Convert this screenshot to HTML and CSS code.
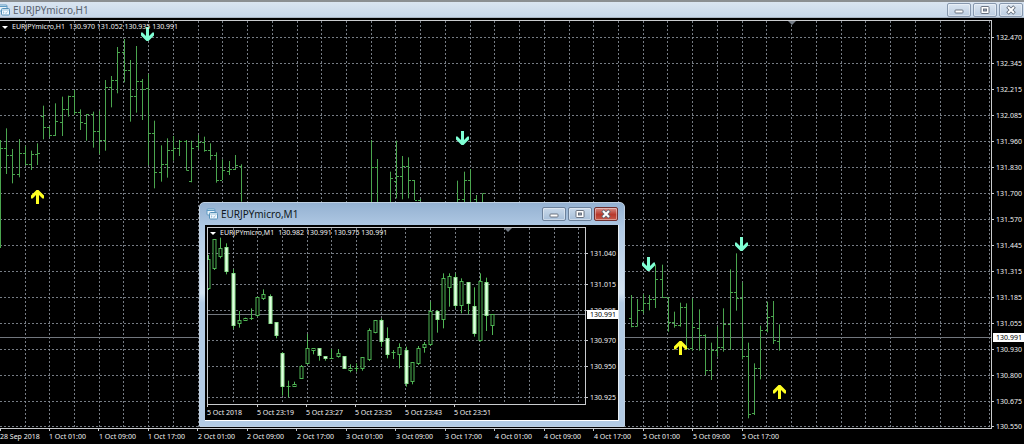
FILE: index.html
```html
<!DOCTYPE html>
<html lang="en">
<head>
<meta charset="utf-8">
<title>EURJPYmicro,H1</title>
<link rel="stylesheet" href="styles.css">
</head>
<body>
<svg class="defs" aria-hidden="true">
  <symbol id="chart-icon" viewBox="0 0 12 12">
    <rect x="1" y="1" width="8" height="6" rx="1" fill="#e9f4fb" stroke="#5f9bc4"/>
    <path d="M1 2.500h8" stroke="#5f9bc4"/>
    <rect x="3.500" y="4.500" width="8" height="6.500" rx="1" fill="#f4faff" stroke="#5590b8"/>
    <path d="M3.500 6h8M5.500 7.500v2M7 8.500l1 1 1.500-2" fill="none" stroke="#7fb0cd" stroke-width="0.8"/>
  </symbol>
  <symbol id="min-icon" viewBox="0 0 12 10">
    <rect x="2" y="5" width="8" height="3" rx="0.800" fill="#fff" stroke="#5d6775" stroke-width="0.9"/>
  </symbol>
  <symbol id="max-icon" viewBox="0 0 12 10">
    <rect x="2" y="1.500" width="8" height="7" rx="0.800" fill="#fff" stroke="#5d6775" stroke-width="0.9"/>
    <rect x="4.500" y="4" width="3" height="2" fill="#9aa7b8" stroke="#5d6775" stroke-width="0.9"/>
  </symbol>
  <symbol id="close-icon" viewBox="0 0 12 10">
    <path d="M2.500 1.500l7 7M9.500 1.500l-7 7" stroke="#5d6775" stroke-width="3.600"/>
    <path d="M3 2l6 6M9 2l-6 6" stroke="#fff" stroke-width="2"/>
  </symbol>
</svg>

<main class="window window-main">
  <header class="titlebar">
    <svg class="app-icon" aria-hidden="true"><use href="#chart-icon"/></svg>
    <h1 class="title">EURJPYmicro,H1</h1>
    <button class="control" aria-label="Minimize"><svg><use href="#min-icon"/></svg></button>
    <button class="control" aria-label="Maximize"><svg><use href="#max-icon"/></svg></button>
    <button class="control" aria-label="Close"><svg><use href="#close-icon"/></svg></button>
  </header>
  <section class="chart" id="h1">
    <svg class="plot"></svg>
    <svg class="prices"></svg>
    <svg class="times"></svg>
    <p class="quote"><span class="arrow"></span><span>EURJPYmicro,H1</span><span>130.970 131.052 130.935 130.991</span></p>
  </section>
</main>

<aside class="window window-child">
  <header class="titlebar">
    <svg class="app-icon" aria-hidden="true"><use href="#chart-icon"/></svg>
    <h2 class="title">EURJPYmicro,M1</h2>
    <button class="control" aria-label="Minimize"><svg><use href="#min-icon"/></svg></button>
    <button class="control" aria-label="Maximize"><svg><use href="#max-icon"/></svg></button>
    <button class="control control-close" aria-label="Close"><svg><use href="#close-icon"/></svg></button>
  </header>
  <section class="chart" id="m1">
    <svg class="plot"></svg>
    <svg class="prices"></svg>
    <svg class="times"></svg>
    <p class="quote"><span class="arrow"></span><span>EURJPYmicro,M1</span><span>130.982 130.991 130.975 130.991</span></p>
  </section>
</aside>
<script src="charts.js"></script>
</body>
</html>
```
FILE: styles.css
```css
* { box-sizing: border-box; }

body {
  margin: 0;
  min-height: 100vh;
  background: #000;
  color: #f0f0f0;
  font-family: "Noto Sans", "DejaVu Sans Condensed", sans-serif;
  overflow: hidden;
}

.defs { position: absolute; width: 0; height: 0; }

.titlebar { display: flex; align-items: center; }

.app-icon { width: 12px; height: 12px; flex: none; }

.title {
  flex: 1;
  margin: 0;
  font-size: 10px;
  font-weight: 400;
  line-height: 14px;
}

.control {
  display: flex;
  align-items: center;
  justify-content: center;
  flex: none;
  width: 24px;
  height: 14px;
  padding: 0;
  border: 1px solid #8798ae;
  border-radius: 2px;
  background: linear-gradient(#dbe6f2, #bccde1);
  box-shadow: inset 0 0 0 1px rgba(255, 255, 255, 0.4);
}

.control svg { width: 12px; height: 10px; }

.window-main .titlebar {
  height: 18px;
  gap: 2px;
  padding-right: 1px;
  border-top: 2px solid #8b8f92;
  border-bottom: 1px solid #a9b5c3;
  background: linear-gradient(#dae5f1, #c6d7e9);
}

.window-main .app-icon { margin-left: -2px; }
.window-main .title { padding-left: 1px; color: #58616d; }

.chart {
  position: relative;
  display: grid;
  grid-template-columns: 1fr 32px;
  padding-top: 2px;
  background: #000;
}

.plot, .prices, .times { display: block; width: 100%; }
.prices { overflow: visible; }

.plot {
  border: 1px solid #c9cbce;
  border-left: 0;
}

.window-main .plot, .window-main .prices { height: 409px; }
.times { grid-column: 1 / -1; height: 15px; }

.quote {
  position: absolute;
  top: 4px;
  left: 2px;
  display: flex;
  align-items: center;
  gap: 4px;
  margin: 0;
  font-size: 7px;
  line-height: 10px;
  white-space: nowrap;
}

.arrow {
  border: 3px solid transparent;
  border-top-color: #fff;
  border-bottom: 0;
}

.window-child {
  position: absolute;
  left: 199px;
  top: 202px;
  width: 426px;
  padding: 0 5px 5px;
  border: 1px solid #bfd0e2;
  border-radius: 5px 5px 1px 1px;
  background: linear-gradient(#94b1d1, #b0c9e4 24px, #d4e3f1 90px, #b3cbe4 100px, #b3cbe4);
}

.window-child .titlebar { height: 22px; gap: 2px; padding-right: 1px; }
.window-child .title { padding-left: 1px; color: #101820; }
.window-child .app-icon { margin-left: 1px; }
.window-child .control { background: linear-gradient(#c9d9ea, #a7bfd9); border-color: #6c819b; }
.window-child .control-close { background: linear-gradient(#d78f88, #b8382b 55%, #c65a4b); border-color: #6e3030; }

.window-child .chart {
  padding: 2px 0 0 2px;
  border-right: 1px solid #e8edf2;
  border-bottom: 1px solid #fff;
}

.window-child .plot { border-left: 1px solid #c9cbce; }
.window-child .plot, .window-child .prices { height: 178px; }
.window-child .quote { top: 3px; left: 5px; }

.grid { stroke: #8b929c; stroke-width: 1; stroke-dasharray: 2 2; opacity: 0.85; }
.tick { stroke: #c9cbce; }
.price-line { stroke: #72777e; }
.bar { stroke: #4aa54e; fill: none; }
.candle { stroke: #4fb554; fill: #000; }
.candle-down { stroke: #8ee590; fill: #e2ffe2; }
.marker { fill: #737b85; }
.label { fill: #f0f0f0; font-size: 7px; }
.label-box { fill: #fff; }
.label-current { fill: #000; }
.sell { fill: #7fffd4; }
.buy { fill: #ffff22; }
```
FILE: charts.js
```js
const NS = "http://www.w3.org/2000/svg";

function add(parent, tag, attrs, text) {
  const node = document.createElementNS(NS, tag);
  for (const key in attrs) node.setAttribute(key, attrs[key]);
  if (text) node.textContent = text;
  parent.appendChild(node);
  return node;
}

// Snap a coordinate to the middle of a device pixel.
const snap = v => Math.floor(v) + 0.5;

// Series values are stored in thirds of a pixel from each series origin.
// OHLC rows: x, high, low, open, close.
const h1Series = [
  { x: 0, y: 0, bars: [
    [1,420,744,0,445],[20,385,522,445,466],[38,447,550,466,522],[57,417,532,522,459],
    [76,438,495,459,493],[95,452,510,493,463],[113,430,495,463,460],[131,317,418,348,381],
    [149,380,412,381,405],[167,310,408,406,364],[187,290,408,366,328],[206,287,350,328,289],
    [223,270,345,289,337],[242,328,390,337,368],[260,342,422,370,344],[279,335,443,344,394],
    [298,333,462,394,421],[316,240,452,421,263],[335,228,322,263,240],[353,141,280,240,158],
    [372,117,247,158,211],[391,180,365,211,289],[409,138,338,289,244],[427,237,360,244,267],
    [446,222,495,265,399],[464,362,565,399,517],[483,436,545,517,492],[502,415,533,492,451],
    [520,408,482,451,446],[539,420,468,446,423],[558,420,512,423,511],[575,422,547,545,445],
    [595,405,447,440,428],[613,410,455,428,450],[631,430,480,450,465],[650,457,548,466,541],
    [668,478,540,541,510],[687,483,525,515,507],[706,465,510,507,495],[725,493,605,498,0]
  ]},
  { x: 340, y: 120, bars: [
    [95,60,250,0,143],[112,117,250,143,0],[150,155,250,0,176],[168,62,235,183,170],
    [187,108,238,170,139],[206,112,235,139,181],[224,180,240,181,240],[241,236,243,240,0],
    [353,182,250,0,238],[372,155,250,238,181],[391,147,250,181,0],[409,225,250,238,0],
    [428,220,250,0,220]
  ]},
  { x: 620, y: 230, bars: [
    [33,195,292,265,288],[52,207,290,288,240],[70,192,250,240,219],[89,195,241,219,207],
    [107,103,234,207,149],[126,104,204,149,201],[144,202,305,202,277],[163,245,293,277,285],
    [181,218,290,285,232],[200,220,358,232,355],[218,205,362,355,293],[237,238,362,295,315],
    [256,313,435,315,421],[274,338,450,421,360],[292,290,380,360,353],[311,235,365,352,283],
    [330,118,360,283,188],[348,70,242,188,205],[367,157,388,205,380],[385,338,565,380,552],
    [404,400,555,550,415],[422,287,448,415,300],[441,215,307,300,262],[460,213,342,258,332],
    [478,283,362,334,0]
  ]}
];

// Candle rows: x, high, low, body top, body bottom, falling.
const m1Candles = [
  [40,180,285,193,284,0],[58,133,225,133,223,0],[76,128,190,160,188,0],[95,145,238,157,233,1],
  [114,222,402,235,393,1],[132,348,398,375,387,0],[151,368,378,370,376,0],[169,340,375,370,370,0],
  [188,305,365,307,363,0],[206,283,315,297,311,0],[225,298,386,303,386,1],[243,382,430,382,424,1],
  [262,471,602,476,577,1],[281,557,607,575,575,0],[299,560,576,567,575,0],[318,510,551,513,551,0],
  [337,417,508,460,508,0],[355,460,478,460,465,0],[374,460,497,460,485,1],[392,483,497,483,491,1],
  [410,462,492,490,490,0],[429,462,488,476,488,0],[447,483,521,483,521,1],[466,508,532,521,528,0],
  [485,505,530,520,520,0],[503,487,527,487,523,0],[522,400,498,407,498,0],[541,375,415,375,413,0],
  [559,370,455,376,442,1],[577,397,490,431,483,1],[596,465,492,473,473,0],[614,445,520,457,480,0],
  [633,455,575,465,567,1],[651,502,568,502,562,0],[670,453,510,460,508,0],[688,441,473,448,460,0],
  [707,320,452,348,449,0],[726,345,413,350,377,1],[744,235,400,250,375,0],[763,235,335,243,280,0],
  [781,235,340,247,333,1],[800,250,355,258,333,0],[819,262,358,262,328,1],[837,277,425,333,417,1],
  [856,235,440,258,438,0],[874,248,408,262,363,1],[893,357,420,357,393,0]
];

const hours = ["01:00", "09:00", "17:00"];
const h1Times = [[0, "28 Sep 2018"]];
for (let i = 0; i < 15; i++) {
  h1Times.push([49 + 49.5 * i, `${1 + Math.floor(i / 3)} Oct ${hours[i % 3]}`]);
}

const charts = [
  {
    id: "h1", left: 0, top: 21, gridX: 25, step: 24.73, priceY: 337, marker: 792,
    prices: [[37,"132.470"],[63,"132.345"],[89,"132.215"],[115,"132.085"],[141,"131.960"],
      [167,"131.830"],[193,"131.700"],[219,"131.570"],[245,"131.445"],[271,"131.315"],
      [297,"131.185"],[323,"131.055"],[349,"130.930"],[375,"130.800"],[401,"130.675"],[426,"130.550"]],
    times: h1Times,
    draw: drawH1
  },
  {
    id: "m1", left: 208, top: 228, gridX: 233, step: 24.7, priceY: 314, marker: 508,
    prices: [[253,"131.040"],[284,"131.015"],[310,"130.995"],[340,"130.970"],[366,"130.950"],[397,"130.925"]],
    times: [[207,"5 Oct 2018"],[257,"5 Oct 23:19"],[306,"5 Oct 23:27"],[355,"5 Oct 23:35"],[405,"5 Oct 23:43"],[454,"5 Oct 23:51"]],
    draw: drawM1
  }
];

// Signal arrow centred on (x, y); dir is 1 for down, -1 for up.
function signal(plot, cls, x, y, dir) {
  const points = [[-1.5,-7],[1.5,-7],[1.5,2],[5,-1.5],[6.5,-1.5],[6.5,1.5],[1,7],[-1,7],[-6.5,1.5],[-6.5,-1.5],[-5,-1.5],[-1.5,2]]
    .map(([dx, dy]) => `${x + 0.5 + dx},${y + dy * dir}`).join(" ");
  add(plot, "polygon", { class: cls, points });
}

function drawH1(plot) {
  for (const s of h1Series) {
    for (const [x, high, low, open, close] of s.bars) {
      const cx = snap(s.x + x / 3);
      const y = v => s.y + v / 3;
      let d = `M${cx} ${y(high)}V${y(low)}`;
      if (open) d += `M${cx - 2.5} ${snap(y(open))}h2`;
      if (close) d += `M${cx + 0.5} ${snap(y(close))}h2`;
      add(plot, "path", { class: "bar", d });
    }
  }
  for (const [x, y] of [[147, 34], [462, 138], [648, 264], [741, 244]]) signal(plot, "sell", x, y, 1);
  for (const [x, y] of [[37, 197], [680, 348], [779, 392]]) signal(plot, "buy", x, y, -1);
}

function drawM1(plot) {
  for (const [x, high, low, top, bottom, falling] of m1Candles) {
    const cx = snap(195 + x / 3);
    const y = v => 195 + v / 3;
    const cls = falling ? "candle candle-down" : "candle";
    add(plot, "path", { class: "candle", d: `M${cx} ${y(high)}V${y(low)}` });
    if (top === bottom) {
      add(plot, "path", { class: cls, d: `M${cx - 2} ${snap(y(top))}h4` });
    } else {
      const t = snap(y(top));
      const h = Math.max(2, Math.round((bottom - top) / 3) - 1);
      add(plot, "rect", { class: cls, x: cx - 1.5, y: t, width: 3, height: h });
    }
  }
}

function render(c) {
  const root = document.getElementById(c.id);
  const [plot, prices, times] = ["plot", "prices", "times"].map(n => root.querySelector("." + n));
  const w = plot.clientWidth, h = plot.clientHeight;
  const right = c.left + w, bottom = c.top + h;
  for (const el of [plot, prices, times]) el.replaceChildren();
  plot.setAttribute("viewBox", `${c.left} ${c.top} ${w} ${h}`);
  prices.setAttribute("viewBox", `0 ${c.top - 1} ${prices.clientWidth} ${prices.clientHeight}`);
  const edge = c.id === "m1" ? c.left - 1 : c.left;
  times.setAttribute("viewBox", `${edge} 0 ${times.clientWidth} ${times.clientHeight}`);

  for (let x = c.gridX; x < right; x += c.step) {
    add(plot, "path", { class: "grid", d: `M${snap(x)} ${c.top}V${bottom}` });
  }
  for (const [y, text] of c.prices) {
    add(plot, "path", { class: "grid", d: `M${c.left} ${y + 0.5}H${right}` });
    add(prices, "path", { class: "tick", d: `M0 ${y + 0.5}h2` });
    add(prices, "text", { class: "label", x: 4, y: y + 3 }, text);
  }
  add(plot, "path", { class: "price-line", d: `M${c.left} ${c.priceY + 0.5}H${right}` });
  add(prices, "rect", { class: "label-box", x: 1, y: c.priceY - 4, width: 31, height: 9 });
  add(prices, "text", { class: "label label-current", x: 4, y: c.priceY + 3 }, "130.991");
  add(plot, "path", { class: "marker", d: `M${c.marker - 4} ${c.top}h8l-4 4z` });
  for (const [x, text] of c.times) {
    add(times, "path", { class: "tick", d: `M${snap(x)} 0v2` });
    add(times, "text", { class: "label", x: Math.round(x), y: 10 }, text);
  }
  c.draw(plot);
}

const renderAll = () => charts.forEach(render);
renderAll();
window.addEventListener("resize", renderAll);
```
